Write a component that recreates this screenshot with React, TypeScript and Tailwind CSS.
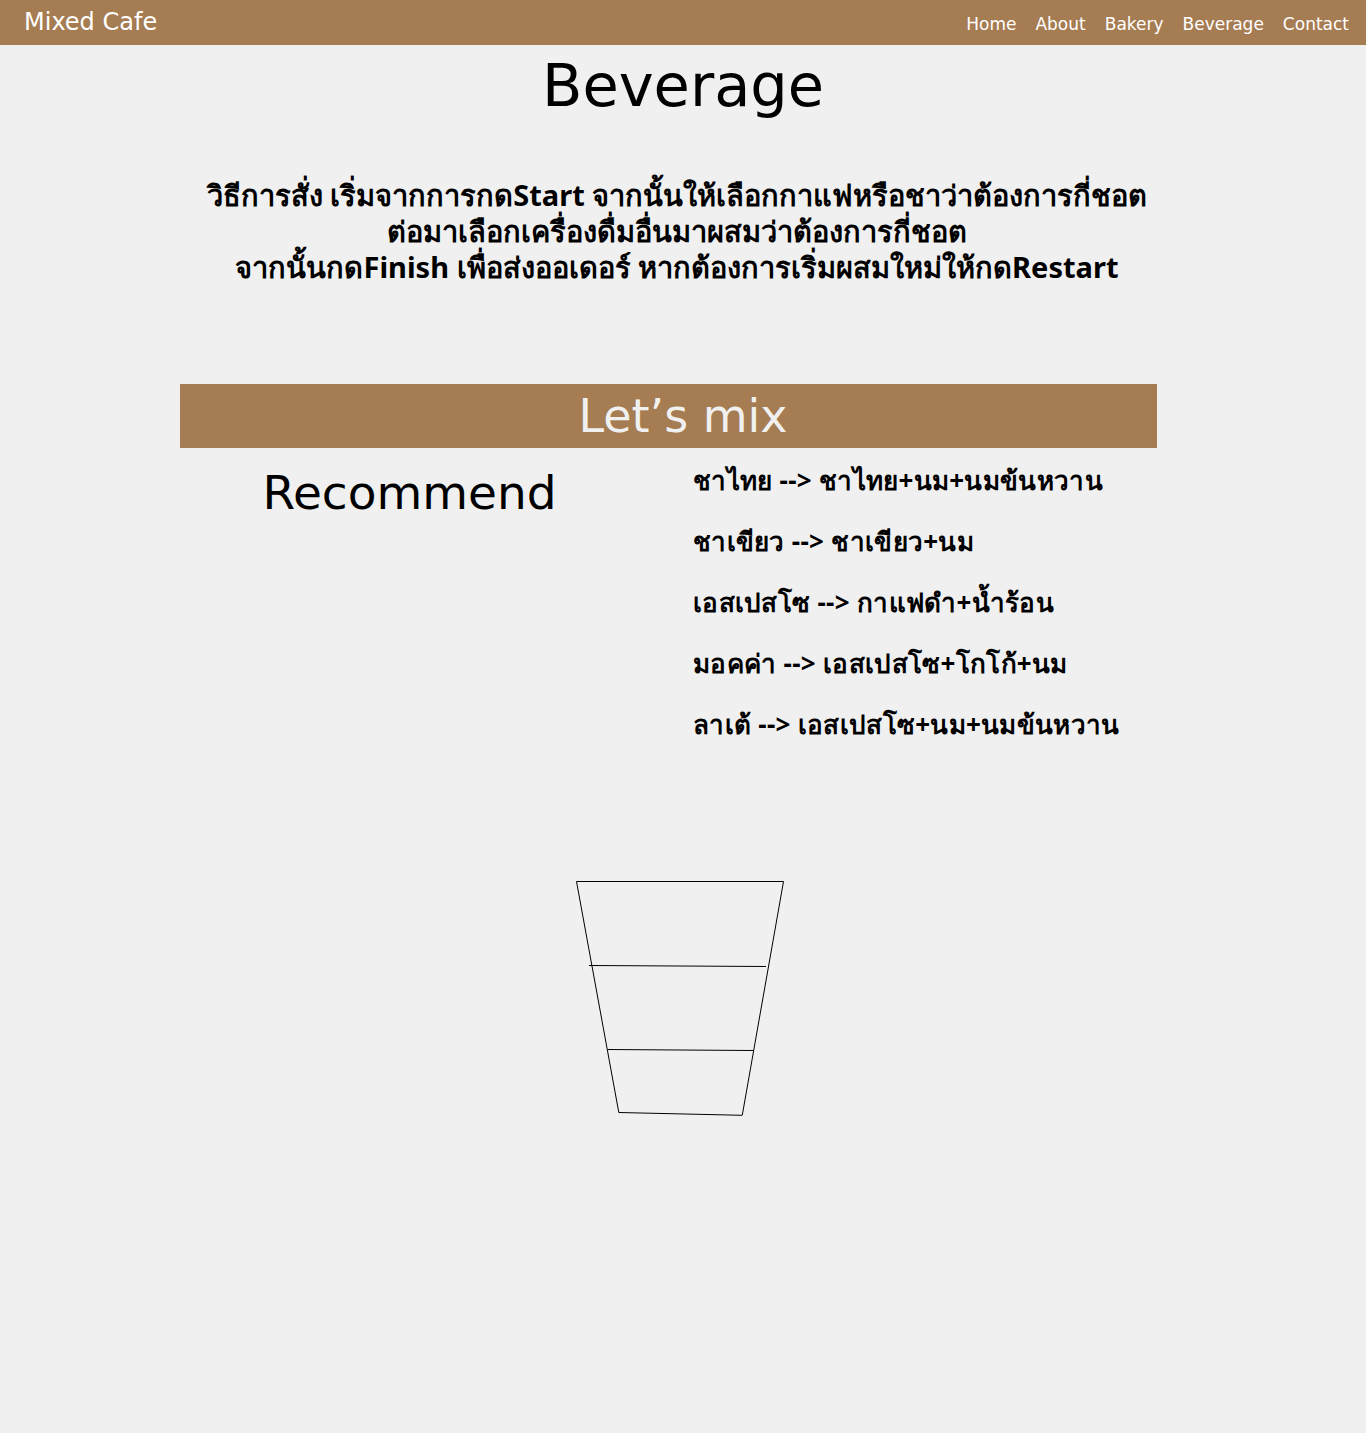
import React from "react";

export default function App() {
  const recs = [
    "ชาไทย --> ชาไทย+นม+นมข้นหวาน",
    "ชาเขียว --> ชาเขียว+นม",
    "เอสเปสโซ --> กาแฟดำ+น้ำร้อน",
    "มอคค่า --> เอสเปสโซ+โกโก้+นม",
    "ลาเต้ --> เอสเปสโซ+นม+นมข้นหวาน",
  ];
  return (
    <div className="min-h-[1433px] w-full bg-[#f0f0f0] text-black">
      <header className="h-[45px] bg-[#a67c52] flex items-center justify-between pl-[24px] pr-[17px]">
        <div className="text-[24px] text-white font-normal -mt-[2px] font-['DejaVu_Sans','Liberation_Sans',sans-serif]">
          Mixed Cafe
        </div>
        <nav className="flex gap-[19px] text-[17px] text-white pt-[4px] font-['DejaVu_Sans','Liberation_Sans',sans-serif]">
          <span>Home</span>
          <span>About</span>
          <span>Bakery</span>
          <span>Beverage</span>
          <span>Contact</span>
        </nav>
      </header>

      <h1 className="text-center text-[59px] leading-[80px] mt-[1px] font-normal font-['DejaVu_Sans','Liberation_Sans',sans-serif]">
        Beverage
      </h1>

      <div className="mt-[51px] pr-[12px] text-center text-[29px] leading-[36px] font-bold font-['Noto_Sans','DejaVu_Sans',sans-serif]">
        <p>วิธีการสั่ง เริ่มจากการกดStart จากนั้นให้เลือกกาแฟหรือชาว่าต้องการกี่ชอต</p>
        <p>ต่อมาเลือกเครื่องดื่มอื่นมาผสมว่าต้องการกี่ชอต</p>
        <p>จากนั้นกดFinish เพื่อส่งออเดอร์ หากต้องการเริ่มผสมใหม่ให้กดRestart</p>
      </div>

      <div className="mt-[99px] ml-[180px] w-[977px] h-[64px] bg-[#a67c52] flex items-center justify-center pl-[29px]">
        <span className="text-[46px] text-[#f0f0f0] font-normal font-['DejaVu_Sans','Liberation_Sans',sans-serif]">
          Let’s mix
        </span>
      </div>

      <div className="flex ml-[180px] w-[977px]">
        <div className="w-[513px] flex justify-center">
          <h2 className="text-[47px] leading-[60px] mt-[15px] mr-[54px] font-['DejaVu_Sans',sans-serif]">
            Recommend
          </h2>
        </div>
        <div className="flex flex-col gap-[25px] pt-[14px] text-[26px] leading-[36px] font-bold tracking-[0.3px] font-['Noto_Sans','DejaVu_Sans',sans-serif]">
          {recs.map((r) => (
            <div key={r}>{r}</div>
          ))}
        </div>
      </div>

      <div className="mt-[128px] flex justify-center">
        <svg width="240" height="260" viewBox="563 870 240 260" fill="none" stroke="#000" strokeWidth="1">
          <line x1="576.5" y1="881.5" x2="783.5" y2="881.5" />
          <line x1="576.5" y1="881.5" x2="618.8" y2="1112.5" />
          <line x1="783.5" y1="881.5" x2="742.3" y2="1115" />
          <line x1="618.8" y1="1112.5" x2="742.3" y2="1115.3" />
          <line x1="589" y1="965.5" x2="766" y2="966.5" />
          <line x1="607.7" y1="1049.5" x2="753.3" y2="1050.5" />
        </svg>
      </div>
    </div>
  );
}
